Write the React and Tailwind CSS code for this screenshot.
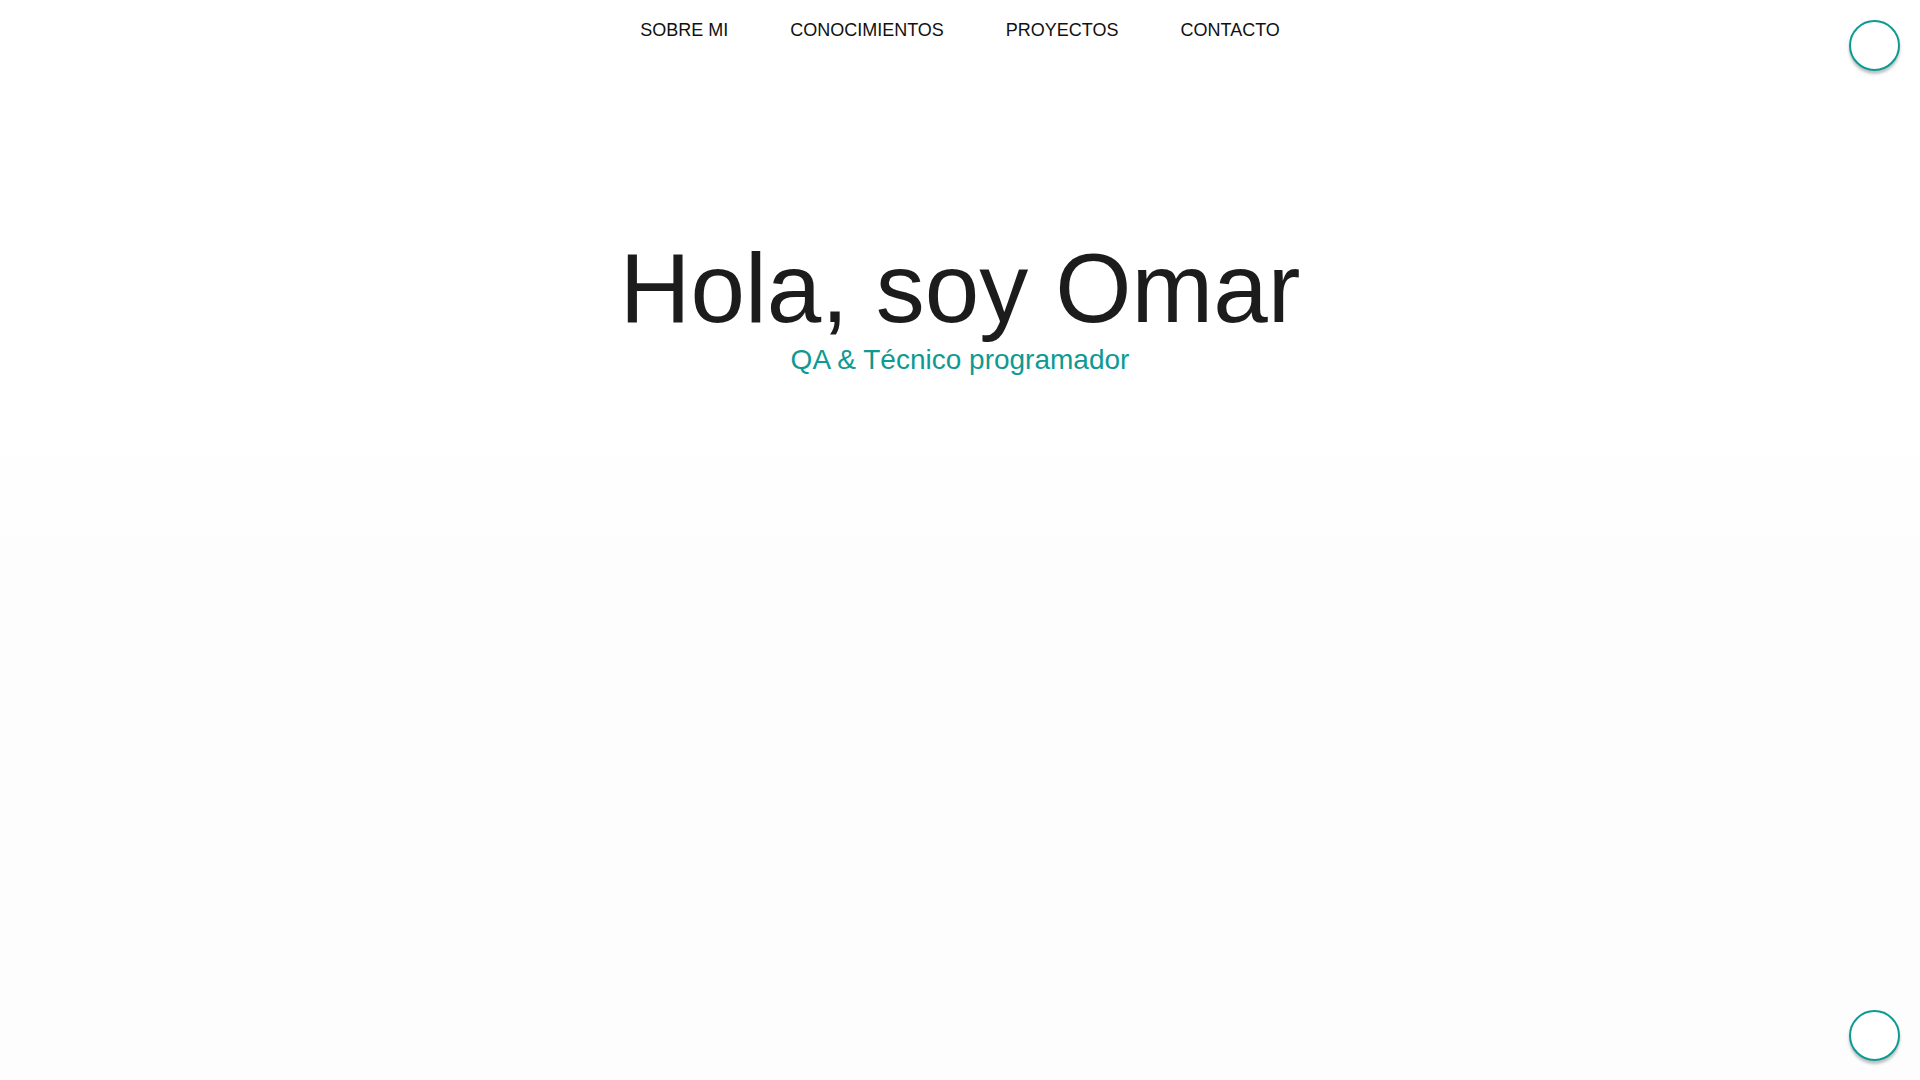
import React from "react";

const navItems = ["SOBRE MI", "CONOCIMIENTOS", "PROYECTOS", "CONTACTO"];

const circleButton =
  "fixed right-[20px] w-[51px] h-[51px] rounded-full border-2 border-[#0e9a93] bg-white shadow-[0_3px_3px_rgb(0_0_0_/_25%)] cursor-pointer";

const App = () => {
  return (
    <div className="relative min-h-screen w-full bg-[linear-gradient(180deg,#ffffff_0px,#ffffff_380px,#fdfdfd_600px,#fdfdfd_100%)] font-['Liberation_Sans',Arial,sans-serif]">
      <nav className="flex h-[60px] w-full items-center justify-center gap-[62px]">
        {navItems.map((item) => (
          <a
            key={item}
            href={`#${item.toLowerCase().replace(" ", "-")}`}
            className="text-[18px] leading-[27px] text-[#111111]"
          >
            {item}
          </a>
        ))}
      </nav>

      <header className="flex w-full flex-col items-center pt-[179px]">
        <h1 className="text-[98px] leading-none text-[#1c1c1c]">Hola, soy Omar</h1>
        <p className="mt-[2px] text-[28px] leading-[1.5] text-[#0e9a93]">
          QA &amp; Técnico programador
        </p>
      </header>

      <button type="button" aria-label="Cambiar tema" className={`${circleButton} top-[20px]`} />
      <button type="button" aria-label="Volver arriba" className={`${circleButton} bottom-[19px]`} />
    </div>
  );
};

export default App;
